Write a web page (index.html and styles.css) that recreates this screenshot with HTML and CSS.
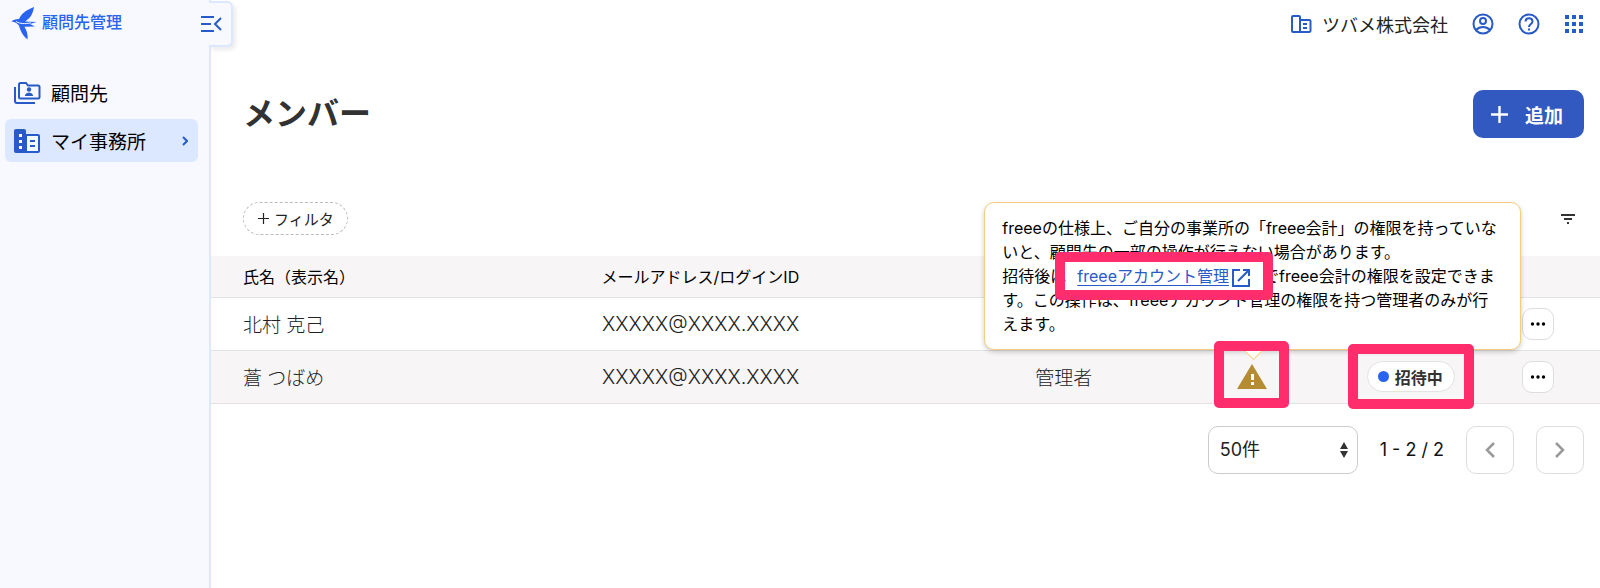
FILE: index.html
```
<!DOCTYPE html>
<html lang="ja">
<head>
<meta charset="utf-8">
<meta name="viewport" content="width=device-width, initial-scale=1">
<title>メンバー</title>
<link rel="stylesheet" href="styles.css">
</head>
<body>

<div class="app">

  <aside class="sidebar">
    <a href="#" class="logo">
      <svg width="28" height="36" viewBox="0 0 28 36" fill="currentColor">
        <path d="M23 1C15 4 10 8 8 13C4 13 2 14 0.500 15.500C4 16 6 17 8 19.500C9 24 12 30 16.500 33.500C17 29 16 25 13.500 20.800L24 20.500L19 18L25.500 16L14 15.500C20 12 22 7 23 1Z"/>
        <path d="M5 15.500C9 18 14 18 20 16.800" fill="none" stroke="#f7f9ff" stroke-width="1"/>
      </svg>
      <span>顧問先管理</span>
    </a>

    <button type="button" class="collapse" aria-label="メニューを閉じる">
      <svg width="22" height="18" viewBox="0 0 22 18" fill="none" stroke="currentColor" stroke-width="2">
        <path d="M1 2H14M1 9H11M1 16H14M21 3L15 9L21 15"/>
      </svg>
    </button>

    <nav class="nav">
      <a href="#" class="nav-item">
        <svg width="28" height="24" viewBox="0 0 28 24" fill="none" stroke="currentColor" stroke-width="2">
          <path d="M2 6V20Q2 22 4 22H22"/>
          <path d="M6 3.500Q6 2 7.500 2H13L15 4.500H25Q26.500 4.500 26.500 6V16Q26.500 17.500 25 17.500H7.500Q6 17.500 6 16Z"/>
          <circle cx="16" cy="8.500" r="2.200" fill="currentColor" stroke="none"/>
          <path d="M12 15V14Q13 11.500 16 11.500T20 14V15Z" fill="currentColor" stroke="none"/>
        </svg>
        <span>顧問先</span>
      </a>
      <a href="#" class="nav-item active">
        <svg width="28" height="24" viewBox="0 0 28 24">
          <path d="M3 0H11Q13 0 13 2V5H25Q27 5 27 7V22Q27 24 25 24H3Q1 24 1 22V2Q1 0 3 0Z" fill="currentColor"/>
          <path d="M14 7H25V22H14Z" fill="#f7f9ff"/>
          <path d="M6 5H9V8H6ZM6 11H9V14H6ZM6 17H9V20H6Z" fill="#fff"/>
          <path d="M17 11H22V13H17ZM17 16H22V18H17Z" fill="currentColor"/>
        </svg>
        <span>マイ事務所</span>
        <svg class="arrow" width="6" height="10" viewBox="0 0 6 10" fill="none" stroke="currentColor" stroke-width="2">
          <path d="M1 1L5 5L1 9"/>
        </svg>
      </a>
    </nav>
  </aside>

  <main class="main">

    <header class="topbar">
      <a href="#" class="company">
        <svg width="22" height="20" viewBox="0 0 22 20" fill="none" stroke="currentColor" stroke-width="2">
          <path d="M10 18H3Q2 18 2 17V3Q2 2 3 2H9Q10 2 10 3V18H19Q20.500 18 20.500 17V7Q20.500 6 19 6H10"/>
          <path d="M13 10H17M13 14H17"/>
        </svg>
        <span>ツバメ株式会社</span>
      </a>
      <button type="button" class="icon-btn" aria-label="アカウント">
        <svg width="22" height="22" viewBox="0 0 22 22" fill="none" stroke="currentColor" stroke-width="2">
          <circle cx="11" cy="11" r="9.500"/>
          <circle cx="11" cy="8" r="3"/>
          <path d="M4 17Q7 14 11 14T18 17"/>
        </svg>
      </button>
      <button type="button" class="icon-btn" aria-label="ヘルプ">
        <svg width="22" height="22" viewBox="0 0 22 22" fill="none" stroke="currentColor" stroke-width="2">
          <circle cx="11" cy="11" r="9.500"/>
          <path d="M7.500 8.500C7.500 4 14.500 4 14.500 8.500C14.500 11 11 11 11 14"/>
          <path d="M11 15.500V17.500"/>
        </svg>
      </button>
      <button type="button" class="icon-btn" aria-label="アプリ一覧">
        <svg width="20" height="20" viewBox="0 0 20 20" fill="currentColor">
          <path d="M1 1H5V5H1ZM8 1H12V5H8ZM15 1H19V5H15ZM1 8H5V12H1ZM8 8H12V12H8ZM15 8H19V12H15ZM1 15H5V19H1ZM8 15H12V19H8ZM15 15H19V19H15Z"/>
        </svg>
      </button>
    </header>

    <div class="title-row">
      <h1>メンバー</h1>
      <button type="button" class="add-btn">
        <svg width="17" height="17" viewBox="0 0 17 17" stroke="currentColor" stroke-width="2.400">
          <path d="M8.500 0V17M0 8.500H17"/>
        </svg>
        追加
      </button>
    </div>

    <div class="filter-row">
      <button type="button" class="filter-btn">
        <svg width="11" height="11" viewBox="0 0 11 11" stroke="currentColor" stroke-width="1.200">
          <path d="M5.500 0V11M0 5.500H11"/>
        </svg>
        フィルタ
      </button>
      <button type="button" class="sort-btn" aria-label="並び替え">
        <svg width="14" height="10" viewBox="0 0 14 10" stroke="currentColor" stroke-width="2">
          <path d="M0 1H14M3 5H11M6 9H8"/>
        </svg>
      </button>
    </div>

    <table class="members">
      <colgroup>
        <col class="col-name">
        <col class="col-mail">
        <col class="col-role">
        <col class="col-warn">
        <col class="col-status">
        <col>
      </colgroup>
      <thead>
        <tr>
          <th>氏名（表示名）</th>
          <th>メールアドレス/ログインID</th>
          <th></th>
          <th></th>
          <th></th>
          <th></th>
        </tr>
      </thead>
      <tbody>
        <tr>
          <td>北村 克己</td>
          <td class="mail">XXXXX@XXXX.XXXX</td>
          <td></td>
          <td></td>
          <td></td>
          <td>
            <button type="button" class="more-btn" aria-label="操作">
              <svg width="16" height="4" viewBox="0 0 16 4" fill="currentColor"><circle cx="2.500" cy="2" r="1.700"/><circle cx="8" cy="2" r="1.700"/><circle cx="13.500" cy="2" r="1.700"/></svg>
            </button>
          </td>
        </tr>
        <tr>
          <td>蒼 つばめ</td>
          <td class="mail">XXXXX@XXXX.XXXX</td>
          <td>管理者</td>
          <td>
            <div class="warning marked">
              <svg width="30" height="30" viewBox="0 0 30 30">
                <path d="M15 2L30 27H0Z" fill="#b58c32"/>
                <path d="M14 12H17V18H14ZM14 20H17V23H14Z" fill="#fff"/>
              </svg>
              <div class="tooltip">
                freeeの仕様上、ご自分の事業所の「freee会計」の権限を持っていな<br>
                いと、顧問先の一部の操作が行えない場合があります。<br>
                招待後は<a href="#" class="marked">freeeアカウント管理<svg width="20" height="20" viewBox="0 0 20 20" fill="none" stroke="currentColor" stroke-width="2"><path d="M9 2H2V18H18V11M12 2H18V8M18 2L7 13"/></svg></a>でfreee会計の権限を設定できま<br>
                す。この操作は、freeeアカウント管理の権限を持つ管理者のみが行<br>
                えます。
              </div>
            </div>
          </td>
          <td><span class="badge marked">招待中</span></td>
          <td>
            <button type="button" class="more-btn" aria-label="操作">
              <svg width="16" height="4" viewBox="0 0 16 4" fill="currentColor"><circle cx="2.500" cy="2" r="1.700"/><circle cx="8" cy="2" r="1.700"/><circle cx="13.500" cy="2" r="1.700"/></svg>
            </button>
          </td>
        </tr>
      </tbody>
    </table>

    <div class="pager">
      <div class="select-wrap">
        <select aria-label="表示件数">
          <option>50件</option>
        </select>
        <svg width="10" height="16" viewBox="0 0 10 16" fill="currentColor">
          <path d="M5 0L9 7H1ZM5 16L1 9H9Z"/>
        </svg>
      </div>
      <span class="range">1 - 2 / 2</span>
      <button type="button" class="page-btn" aria-label="前へ">
        <svg width="10" height="16" viewBox="0 0 10 16" fill="none" stroke="currentColor" stroke-width="2.500"><path d="M9 1L2 8L9 15"/></svg>
      </button>
      <button type="button" class="page-btn" aria-label="次へ">
        <svg width="10" height="16" viewBox="0 0 10 16" fill="none" stroke="currentColor" stroke-width="2.500"><path d="M1 1L8 8L1 15"/></svg>
      </button>
    </div>

  </main>
</div>

</body>
</html>
```
FILE: styles.css
```
* {
  box-sizing: border-box;
}

body {
  margin: 0;
  font-family: Inter, "Noto Sans CJK JP", sans-serif;
  font-size: 16px;
  color: #000;
  background-color: #fff;
}

button {
  font-family: inherit;
  padding: 0;
  border: none;
  background: none;
  cursor: pointer;
}

a {
  color: inherit;
  text-decoration: none;
}

svg {
  display: block;
  flex: none;
}

.app {
  display: flex;
  min-height: 100vh;
}

/* sidebar */
.sidebar {
  position: relative;
  flex: none;
  width: 211px;
  padding: 4px 11px 0 5px;
  background-color: #f7f9ff;
  border-right: 2px solid #dce8ff;
}

.logo {
  display: flex;
  align-items: center;
  gap: 3px;
  height: 36px;
  padding-left: 6px;
  color: #2864f0;
  font-weight: 500;
  line-height: 24px;
}

.logo svg {
  margin-top: 4px;
}

.collapse {
  display: flex;
  align-items: center;
  position: absolute;
  top: 1px;
  right: -24px;
  width: 24px;
  height: 46px;
  color: #285ac8;
  background-color: #f7f9ff;
  border: 2px solid #dce8ff;
  border-left: none;
  border-radius: 0 6px 6px 0;
  box-shadow: 3px 3px 4px rgba(0, 0, 0, 0.08);
}

.collapse svg {
  margin-left: -9px;
}

.nav {
  display: flex;
  flex-direction: column;
  gap: 5px;
  margin-top: 31px;
}

.nav-item {
  display: flex;
  align-items: center;
  gap: 10px;
  height: 43px;
  padding: 0 10px 0 8px;
  border-radius: 6px;
  font-size: 19px;
}

.nav-item svg {
  color: #285ac8;
}

.nav-item.active {
  background-color: #dce8ff;
}

.nav-item .arrow {
  margin-left: auto;
}

/* content */
.main {
  flex: 1;
  min-width: 0;
}

.topbar {
  display: flex;
  align-items: center;
  justify-content: flex-end;
  gap: 24px;
  height: 48px;
  padding-right: 16px;
  color: #285ac8;
}

.company {
  display: flex;
  align-items: center;
  gap: 10px;
  font-size: 18px;
}

.company span {
  color: #222;
}

.icon-btn {
  color: inherit;
}

.title-row {
  display: flex;
  align-items: center;
  justify-content: space-between;
  margin-top: 42px;
  padding: 0 16px 0 32px;
}

h1 {
  margin: 0;
  font-size: 32px;
  line-height: 48px;
  color: #323232;
}

.add-btn {
  display: flex;
  align-items: center;
  gap: 17px;
  height: 48px;
  padding: 0 21px 0 18px;
  border-radius: 10px;
  background-color: #3259c0;
  color: #fff;
  font-size: 19px;
  font-weight: 700;
}

.filter-row {
  display: flex;
  align-items: center;
  justify-content: space-between;
  margin-top: 64px;
  padding: 0 25px 0 32px;
}

.filter-btn {
  display: flex;
  align-items: center;
  gap: 5px;
  height: 33px;
  padding: 0 13px 0 14px;
  border: 1px dashed #bbb;
  border-radius: 17px;
  color: #222;
  font-size: 15px;
}

.sort-btn {
  color: #323232;
}

.members {
  width: 100%;
  margin-top: 21px;
  table-layout: fixed;
  border-collapse: collapse;
}

.col-name { width: 23.5%; }
.col-mail { width: 20%; }
.col-role { width: 21.1%; }
.col-warn { width: 12.6%; }
.col-status { width: 13.5%; }

.members th,
.members td {
  padding: 0 16px;
  text-align: right;
  border-bottom: 1px solid #e4e2e2;
}

.members th {
  height: 41px;
  background-color: #f7f5f5;
  font-weight: 400;
}

.members td {
  height: 53px;
  font-size: 19px;
  font-weight: 300;
  color: #222;
}

.members tr > :first-child {
  padding-left: 32px;
  text-align: left;
}

.members tr > :last-child {
  padding-right: 46px;
}

.members tbody tr:nth-child(even) {
  background-color: #f7f5f5;
}

.members .mail {
  font-size: 20px;
}

.more-btn {
  display: flex;
  align-items: center;
  justify-content: center;
  width: 32px;
  height: 32px;
  margin-left: auto;
  border: 1px solid #ddd;
  border-radius: 10px;
  background-color: #fff;
  color: #000;
}

.badge {
  display: flex;
  align-items: center;
  gap: 6px;
  width: fit-content;
  height: 31px;
  margin-left: auto;
  padding: 0 11px 0 10px;
  border: 1px solid #e4e2e2;
  border-radius: 16px;
  background-color: #fff;
  color: #323232;
  font-size: 16px;
  font-weight: 700;
}

.badge::before {
  content: "";
  width: 11px;
  height: 11px;
  border-radius: 50%;
  background-color: #2864f0;
}

.warning {
  width: 30px;
  height: 30px;
  margin-left: auto;
}

.tooltip {
  position: absolute;
  left: 50%;
  bottom: calc(100% + 12px);
  width: 537px;
  margin-left: -268px;
  padding: 13px 17px;
  border: 1px solid #f5cd7d;
  border-radius: 10px;
  background-color: #fff;
  box-shadow: 0 2px 5px rgba(0, 0, 0, 0.2);
  color: #000;
  font-size: 16px;
  font-weight: 400;
  line-height: 24px;
  text-align: left;
  white-space: nowrap;
}

.tooltip::after {
  content: "";
  position: absolute;
  left: 50%;
  bottom: -8px;
  width: 14px;
  height: 14px;
  margin-left: -7px;
  border: solid #f5cd7d;
  border-width: 0 1px 1px 0;
  background-color: #fff;
  transform: rotate(45deg);
}

.tooltip a {
  margin: 0 12px 0 11px;
  color: #285ac8;
  text-decoration: underline;
  text-underline-offset: 3px;
}

.tooltip a svg {
  display: inline-block;
  margin-left: 2px;
  vertical-align: -6px;
}

/* pink frames */
.marked {
  position: relative;
}

.marked::after {
  content: "";
  position: absolute;
  z-index: 1;
  border: 10px solid #ff2d6c;
  border-radius: 5px;
  pointer-events: none;
}

.warning.marked::after {
  inset: -21px -22px -16px -23px;
}

.badge.marked::after {
  inset: -18px -20px;
}

.tooltip .marked::after {
  inset: -14px -22px;
}

/* pager */
.pager {
  display: flex;
  align-items: center;
  justify-content: flex-end;
  gap: 22px;
  margin-top: 22px;
  padding-right: 16px;
}

.select-wrap {
  position: relative;
}

.select-wrap select {
  width: 150px;
  height: 48px;
  padding: 0 11px;
  border: 1px solid #ccc;
  border-radius: 10px;
  appearance: none;
  background-color: #fff;
  color: #222;
  font-family: inherit;
  font-size: 18px;
}

.select-wrap svg {
  position: absolute;
  top: 16px;
  right: 9px;
  color: #323232;
  pointer-events: none;
}

.range {
  font-size: 18px;
  color: #111;
}

.page-btn {
  display: flex;
  align-items: center;
  justify-content: center;
  width: 48px;
  height: 48px;
  border: 1px solid #ddd;
  border-radius: 10px;
  color: #999;
}
```
